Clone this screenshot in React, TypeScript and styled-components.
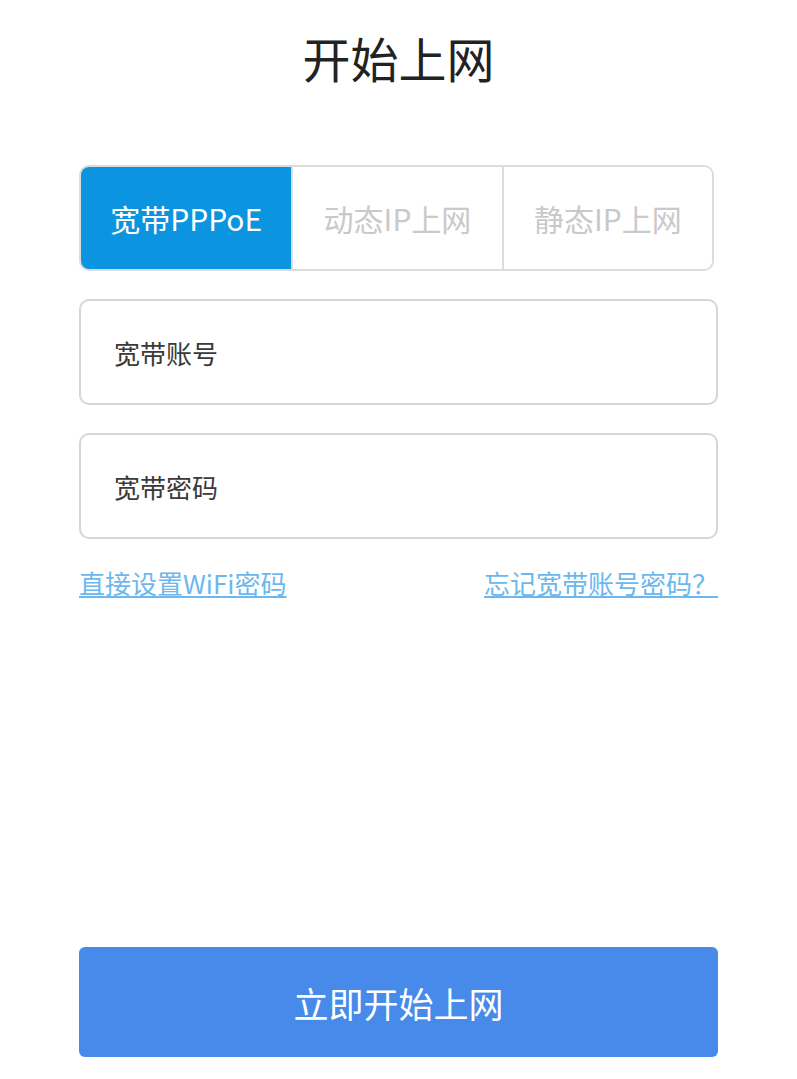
import React from "react";
import styled, { createGlobalStyle } from "styled-components";

const tabs = ["宽带PPPoE", "动态IP上网", "静态IP上网"];

const GlobalStyle = createGlobalStyle`
  body {
    margin: 0;
    background: #ffffff;
    font-family: "Noto Sans CJK SC", "Noto Sans", sans-serif;
  }
`;

export default function App() {
  const [active, setActive] = React.useState(0);

  return (
    <Page>
      <GlobalStyle />
      <Title>开始上网</Title>
      <Tabs>
        {tabs.map((tab, i) => (
          <Tab key={tab} active={i === active} onClick={() => setActive(i)}>
            {tab}
          </Tab>
        ))}
      </Tabs>
      <Field>
        <Input placeholder="宽带账号" />
      </Field>
      <Field>
        <Input placeholder="宽带密码" type="password" />
      </Field>
      <Links>
        <LinkText href="#">直接设置WiFi密码</LinkText>
        <LinkText href="#">忘记宽带账号密码？</LinkText>
      </Links>
      <Spacer />
      <SubmitButton>立即开始上网</SubmitButton>
    </Page>
  );
}

const Page = styled.div`
  display: flex;
  flex-direction: column;
  min-height: 1079px;
  box-sizing: border-box;
  padding: 25px 79px 22px;
`;

const Title = styled.h1`
  margin: 0;
  text-align: center;
  font-size: 48px;
  font-weight: 400;
  color: #222;
  line-height: 64px;
`;

const Tabs = styled.div`
  display: grid;
  grid-template-columns: repeat(3, 1fr);
  margin: 76px 4px 0 0;
  height: 106px;
  border: 2px solid #dcdcdc;
  border-radius: 10px;
  overflow: hidden;
  box-sizing: border-box;
`;

const Tab = styled.div<{ active: boolean }>`
  display: flex;
  align-items: center;
  justify-content: center;
  font-size: 30px;
  cursor: pointer;
  color: ${(p) => (p.active ? "#ffffff" : "#c9c9c9")};
  background: ${(p) => (p.active ? "#0b94df" : "#ffffff")};
  & + & {
    border-left: 2px solid #dcdcdc;
  }
`;

const Field = styled.div`
  margin-top: 28px;
  height: 106px;
  border: 2px solid #d6d6d6;
  border-radius: 10px;
  display: flex;
  align-items: center;
  padding: 0 31px;
  box-sizing: border-box;
`;

const Input = styled.input`
  flex: 1;
  border: none;
  outline: none;
  font-family: inherit;
  font-size: 26px;
  color: #333;
  background: transparent;
  &::placeholder {
    color: #3a3a3a;
  }
`;

const Links = styled.div`
  display: flex;
  justify-content: space-between;
  margin-top: 26px;
`;

const LinkText = styled.a`
  font-size: 26px;
  color: #6cb8ee;
  text-decoration: underline;
  line-height: 36px;
`;

const Spacer = styled.div`
  flex: 1;
`;

const SubmitButton = styled.button`
  height: 110px;
  border: none;
  border-radius: 6px;
  background: #478aea;
  color: #ffffff;
  font-family: inherit;
  font-size: 35px;
  cursor: pointer;
`;
